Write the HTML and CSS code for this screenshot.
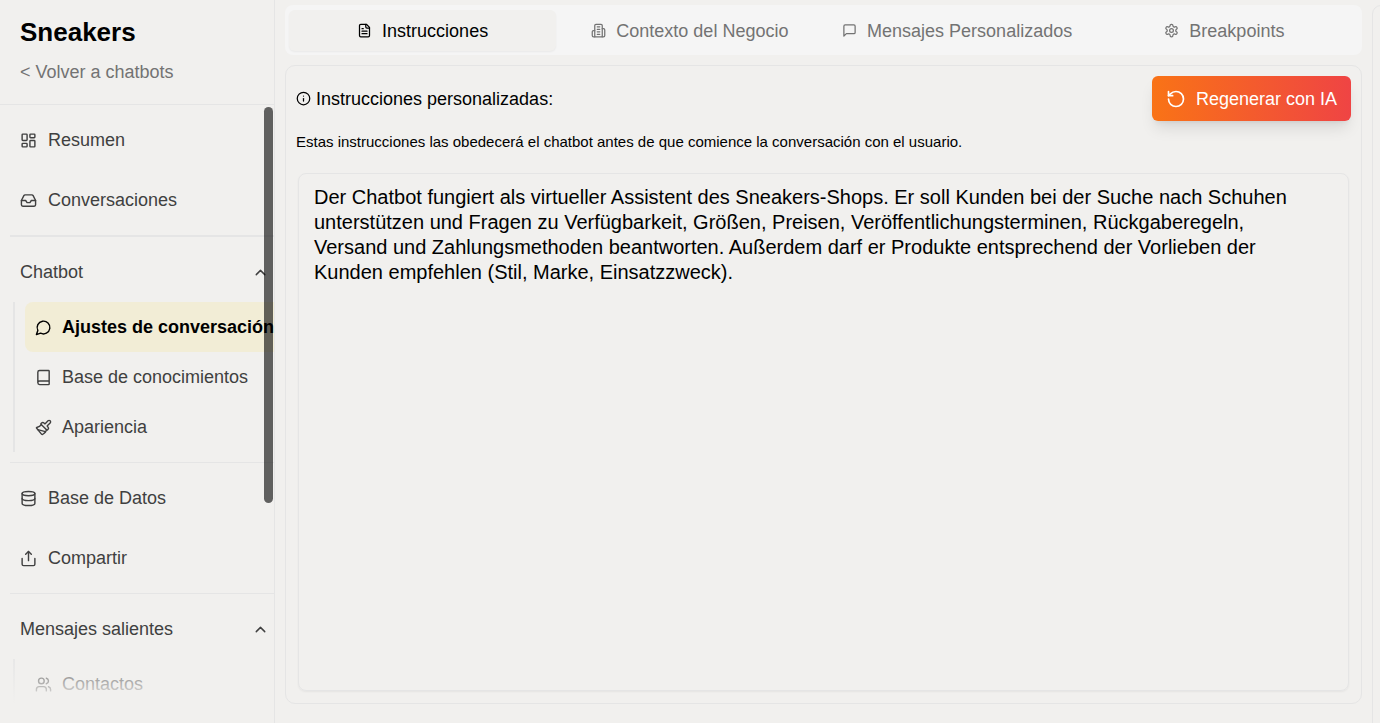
FILE: index.html
```html
<!DOCTYPE html>
<html lang="es">
<head>
    <meta charset="UTF-8">
    <meta name="viewport" content="width=device-width, initial-scale=1.0">
    <title>Sneakers - Ajustes de conversación</title>
    <link rel="stylesheet" href="styles.css">
</head>
<body>
    <div class="layout">
        <aside class="sidebar">
            <header class="sidebar-header">
                <h1>Sneakers</h1>
                <a href="#" class="back-link">&lt; Volver a chatbots</a>
            </header>

            <nav class="sidebar-nav">
                <a href="#" class="nav-item">
                    <svg class="icon" viewBox="0 0 24 24"><rect width="7" height="9" x="3" y="3" rx="1"/><rect width="7" height="5" x="14" y="3" rx="1"/><rect width="7" height="9" x="14" y="12" rx="1"/><rect width="7" height="5" x="3" y="16" rx="1"/></svg>
                    Resumen
                </a>
                <a href="#" class="nav-item">
                    <svg class="icon" viewBox="0 0 24 24"><path d="M22 12h-6l-2 3h-4l-2-3H2"/><path d="M5.45 5.11 2 12v6a2 2 0 0 0 2 2h16a2 2 0 0 0 2-2v-6l-3.45-6.89A2 2 0 0 0 16.76 4H7.24a2 2 0 0 0-1.79 1.11z"/></svg>
                    Conversaciones
                </a>

                <hr class="thick">

                <button type="button" class="nav-group">
                    Chatbot
                    <svg class="icon chevron" viewBox="0 0 24 24"><path d="m18 15-6-6-6 6"/></svg>
                </button>
                <div class="subnav">
                    <a href="#" class="subnav-item active">
                        <svg class="icon" viewBox="0 0 24 24"><path d="M7.9 20A9 9 0 1 0 4 16.1L2 22Z"/></svg>
                        Ajustes de conversación
                    </a>
                    <a href="#" class="subnav-item">
                        <svg class="icon" viewBox="0 0 24 24"><path d="M4 19.5v-15A2.5 2.5 0 0 1 6.5 2H19a1 1 0 0 1 1 1v18a1 1 0 0 1-1 1H6.5a1 1 0 0 1 0-5H20"/></svg>
                        Base de conocimientos
                    </a>
                    <a href="#" class="subnav-item">
                        <svg class="icon" viewBox="0 0 24 24"><path d="m14.622 17.897-10.68-2.913"/><path d="M18.376 2.622a1 1 0 1 1 3.002 3.002L17.36 9.643a.5.5 0 0 0 0 .707l.944.944a2.41 2.41 0 0 1 0 3.408l-.944.944a.5.5 0 0 1-.707 0L8.354 7.348a.5.5 0 0 1 0-.707l.944-.944a2.41 2.41 0 0 1 3.408 0l.944.944a.5.5 0 0 0 .707 0z"/><path d="M9 8c-1.804 2.71-3.97 3.46-6.583 3.948a.507.507 0 0 0-.302.819l7.32 8.883a1 1 0 0 0 1.185.204C12.735 20.405 16 16.792 16 15"/></svg>
                        Apariencia
                    </a>
                </div>

                <hr class="spaced">

                <a href="#" class="nav-item">
                    <svg class="icon" viewBox="0 0 24 24"><ellipse cx="12" cy="5" rx="9" ry="3"/><path d="M3 5v14a9 3 0 0 0 18 0V5"/><path d="M3 12a9 3 0 0 0 18 0"/></svg>
                    Base de Datos
                </a>
                <a href="#" class="nav-item">
                    <svg class="icon" viewBox="0 0 24 24"><path d="M3 12v8a2 2 0 0 0 2 2h14a2 2 0 0 0 2-2v-8"/><path d="m16 6-4-4-4 4"/><path d="M12 2v13"/></svg>
                    Compartir
                </a>

                <hr>

                <button type="button" class="nav-group">
                    Mensajes salientes
                    <svg class="icon chevron" viewBox="0 0 24 24"><path d="m18 15-6-6-6 6"/></svg>
                </button>
                <div class="subnav">
                    <a href="#" class="subnav-item">
                        <svg class="icon" viewBox="0 0 24 24"><path d="M16 21v-2a4 4 0 0 0-4-4H6a4 4 0 0 0-4 4v2"/><circle cx="9" cy="7" r="4"/><path d="M22 21v-2a4 4 0 0 0-3-3.87"/><path d="M16 3.13a4 4 0 0 1 0 7.75"/></svg>
                        Contactos
                    </a>
                </div>
                <div class="scroll-thumb"></div>
                <div class="fade"></div>
            </nav>
        </aside>

        <main class="content">
            <div class="tabs" role="tablist">
                <button type="button" class="tab selected" role="tab">
                    <svg class="icon" viewBox="0 0 24 24"><path d="M15 2H6a2 2 0 0 0-2 2v16a2 2 0 0 0 2 2h12a2 2 0 0 0 2-2V7Z"/><path d="M14 2v4a2 2 0 0 0 2 2h4"/><path d="M10 9H8"/><path d="M16 13H8"/><path d="M16 17H8"/></svg>
                    Instrucciones
                </button>
                <button type="button" class="tab" role="tab">
                    <svg class="icon" viewBox="0 0 24 24"><path d="M6 22V4a2 2 0 0 1 2-2h8a2 2 0 0 1 2 2v18Z"/><path d="M6 12H4a2 2 0 0 0-2 2v6a2 2 0 0 0 2 2h2"/><path d="M18 9h2a2 2 0 0 1 2 2v9a2 2 0 0 1-2 2h-2"/><path d="M10 6h4"/><path d="M10 10h4"/><path d="M10 14h4"/><path d="M10 18h4"/></svg>
                    Contexto del Negocio
                </button>
                <button type="button" class="tab" role="tab">
                    <svg class="icon" viewBox="0 0 24 24"><path d="M21 15a2 2 0 0 1-2 2H7l-4 4V5a2 2 0 0 1 2-2h14a2 2 0 0 1 2 2z"/></svg>
                    Mensajes Personalizados
                </button>
                <button type="button" class="tab" role="tab">
                    <svg class="icon" viewBox="0 0 24 24"><path d="M12.22 2h-.44a2 2 0 0 0-2 2v.18a2 2 0 0 1-1 1.73l-.43.25a2 2 0 0 1-2 0l-.15-.08a2 2 0 0 0-2.73.73l-.22.38a2 2 0 0 0 .73 2.73l.15.1a2 2 0 0 1 1 1.72v.51a2 2 0 0 1-1 1.74l-.15.09a2 2 0 0 0-.73 2.73l.22.38a2 2 0 0 0 2.73.73l.15-.08a2 2 0 0 1 2 0l.43.25a2 2 0 0 1 1 1.73V20a2 2 0 0 0 2 2h.44a2 2 0 0 0 2-2v-.18a2 2 0 0 1 1-1.73l.43-.25a2 2 0 0 1 2 0l.15.08a2 2 0 0 0 2.73-.73l.22-.39a2 2 0 0 0-.73-2.73l-.15-.08a2 2 0 0 1-1-1.74v-.5a2 2 0 0 1 1-1.74l.15-.09a2 2 0 0 0 .73-2.73l-.22-.38a2 2 0 0 0-2.73-.73l-.15.08a2 2 0 0 1-2 0l-.43-.25a2 2 0 0 1-1-1.73V4a2 2 0 0 0-2-2z"/><circle cx="12" cy="12" r="3"/></svg>
                    Breakpoints
                </button>
            </div>

            <section class="card">
                <div class="card-header">
                    <label for="instructions">
                        <svg class="icon" viewBox="0 0 24 24"><circle cx="12" cy="12" r="10"/><path d="M12 16v-4"/><path d="M12 8h.01"/></svg>
                        Instrucciones personalizadas:
                    </label>
                    <button type="button" class="regenerate-btn">
                        <svg class="icon" viewBox="0 0 24 24"><path d="M3 12a9 9 0 1 0 9-9 9.75 9.75 0 0 0-6.74 2.74L3 8"/><path d="M3 3v5h5"/></svg>
                        Regenerar con IA
                    </button>
                </div>
                <p class="hint">Estas instrucciones las obedecerá el chatbot antes de que comience la conversación con el usuario.</p>
                <textarea id="instructions" name="instructions" spellcheck="false">Der Chatbot fungiert als virtueller Assistent des Sneakers-Shops. Er soll Kunden bei der Suche nach Schuhen
unterstützen und Fragen zu Verfügbarkeit, Größen, Preisen, Veröffentlichungsterminen, Rückgaberegeln,
Versand und Zahlungsmethoden beantworten. Außerdem darf er Produkte entsprechend der Vorlieben der
Kunden empfehlen (Stil, Marke, Einsatzzweck).</textarea>
            </section>
        </main>

        <aside class="preview"></aside>
    </div>
</body>
</html>
```
FILE: styles.css
```css
/* General Reset */
* {
  margin: 0;
  padding: 0;
  box-sizing: border-box;
}

body {
  font-family: "Liberation Sans", Arial, sans-serif;
  font-size: 18px;
  line-height: 26px;
  background-color: #f1f0ee;
  color: #000;
}

a {
  color: inherit;
  text-decoration: none;
}

button {
  font: inherit;
  color: inherit;
  background: none;
  border: none;
  cursor: pointer;
}

.icon {
  width: 17px;
  height: 17px;
  flex-shrink: 0;
  fill: none;
  stroke: currentColor;
  stroke-width: 2;
  stroke-linecap: round;
  stroke-linejoin: round;
}

.layout {
  display: grid;
  grid-template-columns: 275px 1fr 8px;
  height: 100vh;
  overflow: hidden;
}

/* Sidebar */
.sidebar {
  display: flex;
  flex-direction: column;
  min-height: 0;
  border-right: 1px solid #e5e5e5;
  color: #404040;
}

.sidebar-header {
  height: 105px;
  padding: 20px;
  border-bottom: 1px solid #e5e5e5;
}

.sidebar-header h1 {
  margin-bottom: 14px;
  font-size: 26px;
  line-height: 25px;
  color: #000;
}

.back-link {
  color: #737373;
}

.sidebar-nav {
  position: relative;
  flex: 1;
  min-height: 0;
  padding: 5px 0 0 10px;
  overflow: hidden;
}

.sidebar-nav hr {
  height: 1px;
  margin: 5px 0;
  border: none;
  background-color: #e5e5e5;
}

.sidebar-nav hr.thick {
  height: 2px;
}

.sidebar-nav hr.spaced {
  margin-top: 10px;
}

.nav-item,
.nav-group {
  display: flex;
  align-items: center;
  gap: 11px;
  width: 100%;
  height: 60px;
  padding-left: 10px;
}

.nav-group {
  justify-content: space-between;
  padding-right: 5px;
}

.subnav {
  margin-left: 3px;
  padding-left: 10px;
  border-left: 2px solid #e5e5e5;
}

.subnav-item {
  display: flex;
  align-items: center;
  gap: 10px;
  height: 50px;
  padding-left: 10px;
  border-radius: 8px;
  white-space: nowrap;
}

.subnav-item.active {
  background-color: #f2edd6;
  border-radius: 8px 0 0 8px;
  color: #000;
  font-weight: bold;
}

.scroll-thumb {
  position: absolute;
  top: 2px;
  right: 1px;
  width: 9px;
  height: 396px;
  border-radius: 5px;
  background-color: rgba(0, 0, 0, 0.6);
}

.fade {
  position: absolute;
  right: 0;
  bottom: 0;
  left: 0;
  height: 65px;
  background: linear-gradient(rgba(241, 240, 238, 0.2), #f1f0ee 70%);
}

/* Main content */
.content {
  display: flex;
  flex-direction: column;
  gap: 10px;
  min-width: 0;
  padding: 5px 10px 19px;
}

.tabs {
  display: grid;
  grid-template-columns: repeat(4, 1fr);
  height: 50px;
  padding: 5px 4px 4px;
  border-radius: 8px;
  background-color: #f5f5f5;
  color: #737373;
}

.tab {
  display: flex;
  align-items: center;
  justify-content: center;
  gap: 10px;
  border-radius: 6px;
}

.tab .icon {
  width: 15px;
  height: 15px;
}

.tab.selected {
  background-color: #f1f0ee;
  color: #000;
  box-shadow: 0 1px 2px rgba(0, 0, 0, 0.05);
}

.card {
  display: flex;
  flex: 1;
  flex-direction: column;
  padding: 10px;
  border: 1px solid #e5e5e5;
  border-radius: 10px;
}

.card-header {
  display: flex;
  align-items: center;
  justify-content: space-between;
}

.card-header label {
  display: flex;
  align-items: center;
  gap: 5px;
}

.card-header label .icon {
  width: 15px;
  height: 15px;
}

.regenerate-btn {
  display: flex;
  align-items: center;
  gap: 10px;
  height: 45px;
  padding: 0 14px;
  border-radius: 6px;
  background: linear-gradient(to right, #f97316, #ef4444);
  color: #fff;
  box-shadow: 0 10px 15px -3px rgba(0, 0, 0, 0.1), 0 4px 6px -4px rgba(0, 0, 0, 0.1);
}

.regenerate-btn .icon {
  width: 20px;
  height: 20px;
}

.hint {
  margin: 8px 0 18px;
  font-size: 15px;
}

textarea {
  flex: 1;
  margin: 0 2px;
  margin-bottom: 2px;
  padding: 11px 15px;
  border: 1px solid #e5e5e5;
  border-radius: 8px;
  outline: none;
  resize: none;
  background: none;
  color: inherit;
  font-family: inherit;
  font-size: 20px;
  line-height: 25px;
  box-shadow: 0 1px 2px rgba(0, 0, 0, 0.05);
}

/* Preview panel on the right edge */
.preview {
  margin: 5px -10px -10px 0;
  border: 1px solid #e5e5e5;
  border-radius: 10px;
}
```
